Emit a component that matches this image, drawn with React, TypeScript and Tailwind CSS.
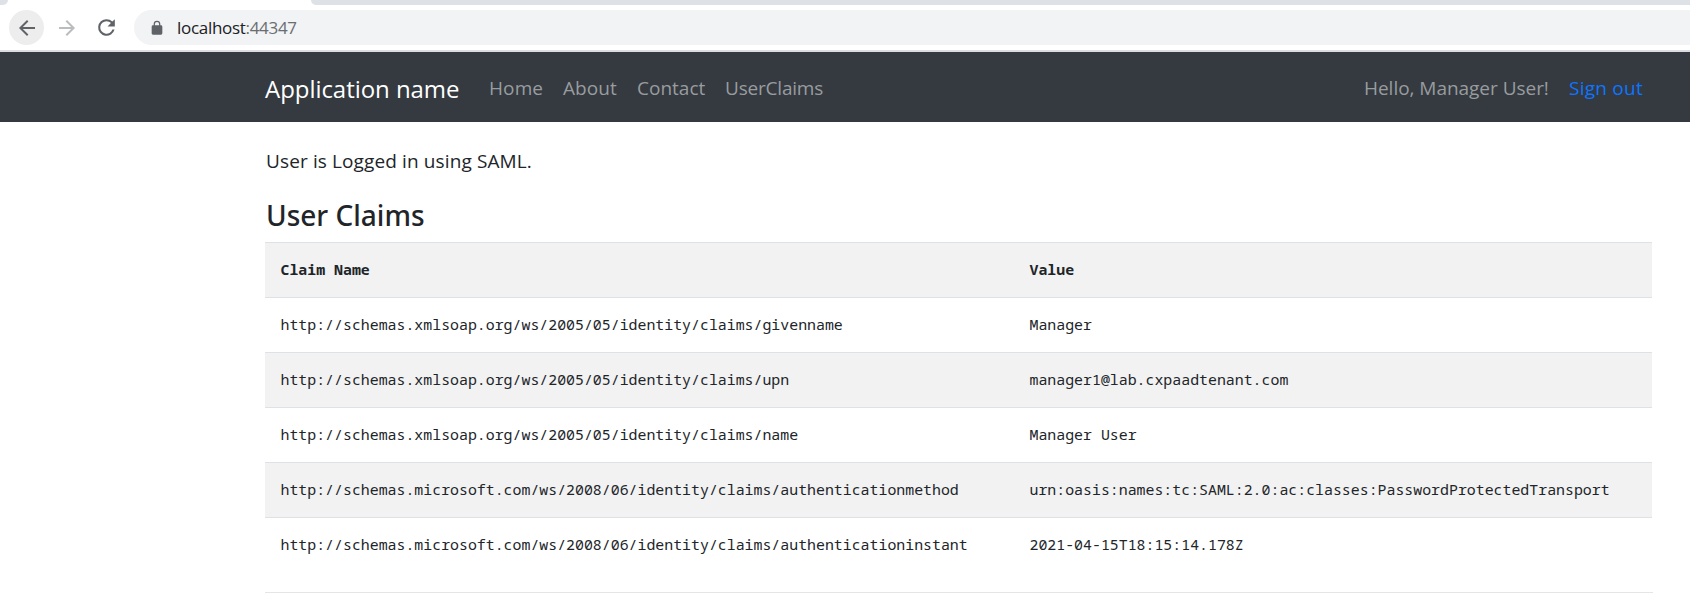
import React from "react";

const claims: [string, string][] = [
  ["http://schemas.xmlsoap.org/ws/2005/05/identity/claims/givenname", "Manager"],
  ["http://schemas.xmlsoap.org/ws/2005/05/identity/claims/upn", "manager1@lab.cxpaadtenant.com"],
  ["http://schemas.xmlsoap.org/ws/2005/05/identity/claims/name", "Manager User"],
  [
    "http://schemas.microsoft.com/ws/2008/06/identity/claims/authenticationmethod",
    "urn:oasis:names:tc:SAML:2.0:ac:classes:PasswordProtectedTransport",
  ],
  [
    "http://schemas.microsoft.com/ws/2008/06/identity/claims/authenticationinstant",
    "2021-04-15T18:15:14.178Z",
  ],
];

function Icon({ d, className }: { d: string; className: string }) {
  return (
    <svg viewBox="0 0 24 24" fill="currentColor" className={className}>
      <path d={d} />
    </svg>
  );
}

function BrowserBar() {
  return (
    <header className="flex h-[52px] flex-col border-b-2 border-[#dadce0] bg-white">
      <div className="flex h-[5px] justify-between">
        <div className="h-[5px] w-[8px] rounded-br-[6px] bg-[#dee1e6]" />
        <div className="h-[5px] w-[1379px] rounded-bl-[6px] bg-[#dee1e6]" />
      </div>
      <div className="flex h-[45px] items-center pl-[9px]">
        <button className="flex size-[35px] items-center justify-center rounded-full bg-[#ededee] text-[#5f6368]">
          <Icon className="size-[24px]" d="M20 11H7.83l5.59-5.59L12 4l-8 8 8 8 1.41-1.41L7.83 13H20v-2z" />
        </button>
        <button className="ml-[11px] text-[#babcbe]">
          <Icon className="size-[24px]" d="M12 4l-1.41 1.41L16.17 11H4v2h12.17l-5.58 5.59L12 20l8-8z" />
        </button>
        <button className="ml-[15px] text-[#5f6368]">
          <Icon
            className="size-[25px]"
            d="M17.65 6.35A7.96 7.96 0 0 0 12 4a8 8 0 1 0 7.73 10h-2.08A6 6 0 1 1 12 6c1.66 0 3.14.69 4.22 1.78L13 11h7V4l-2.35 2.35z"
          />
        </button>
        <div className="ml-[15px] flex h-[35px] flex-1 items-center rounded-l-full bg-[#f1f3f4] pl-[15px]">
          <Icon
            className="size-[16px] text-[#5f6368]"
            d="M18 8h-1V6A5 5 0 0 0 7 6v2H6a2 2 0 0 0-2 2v10c0 1.1.9 2 2 2h12a2 2 0 0 0 2-2V10a2 2 0 0 0-2-2zM8.9 8V6a3.1 3.1 0 0 1 6.2 0v2z"
          />
          <span className="ml-[12px] text-[17px] leading-[24px] tracking-[-0.3px] text-[#202124]">
            localhost<span className="text-[#6a6e73]">:44347</span>
          </span>
        </div>
      </div>
    </header>
  );
}

function NavBar() {
  return (
    <nav className="flex h-[70px] items-center bg-[#343a40] pr-[45px] pl-[265px] text-[19px] text-[#999c9f]">
      <a className="w-[224px] pt-[3px] text-[24px] tracking-[-0.05px] text-white">Application name</a>
      <a className="w-[74px] pt-[3px] tracking-[0.1px]">Home</a>
      <a className="w-[74px] pt-[3px] tracking-[0.1px]">About</a>
      <a className="w-[88px] pt-[3px]">Contact</a>
      <a className="pt-[3px] tracking-[-0.2px]">UserClaims</a>
      <span className="ml-auto w-[205px] pt-[3px] tracking-[-0.03px]">Hello, Manager User!</span>
      <a className="w-[76px] pt-[3px] tracking-[0.25px] text-[#0d75ff]">Sign out</a>
    </nav>
  );
}

export default function App() {
  return (
    <div className="h-[612px] overflow-hidden bg-white font-['Open_Sans','Noto_Sans',sans-serif] text-[#212529]">
      <BrowserBar />
      <NavBar />
      <main className="pr-[37px] pl-[265px]">
        <p className="pt-[24px] pl-px text-[19px] leading-[30px] tracking-[0.12px]">User is Logged in using SAML.</p>
        <h2 className="mt-[21px] mb-[9px] pl-px font-['Noto_Sans'] text-[28px] leading-[36px] font-medium">User Claims</h2>
        <table className="w-[1387px] table-fixed border-collapse text-left font-['Noto_Sans_Mono','DejaVu_Sans_Mono',monospace] text-[14.89px] leading-[24px]">
          <thead>
            <tr className="h-[55px] border-t border-[#dee2e6] bg-[#f2f2f2]">
              <th className="w-[749px] pb-[2px] pl-[15.5px] font-bold">Claim Name</th>
              <th className="pb-[2px] pl-[15.5px] font-bold">Value</th>
            </tr>
          </thead>
          <tbody>
            {claims.map(([name, value]) => (
              <tr key={name} className="h-[55px] border-t border-[#dee2e6] even:bg-[#f2f2f2]">
                <td className="pb-[2px] pl-[15.5px]">{name}</td>
                <td className="pb-[2px] pl-[15.5px]">{value}</td>
              </tr>
            ))}
          </tbody>
        </table>
        <hr className="mt-[19px] border-[#e5e5e5]" />
      </main>
    </div>
  );
}
